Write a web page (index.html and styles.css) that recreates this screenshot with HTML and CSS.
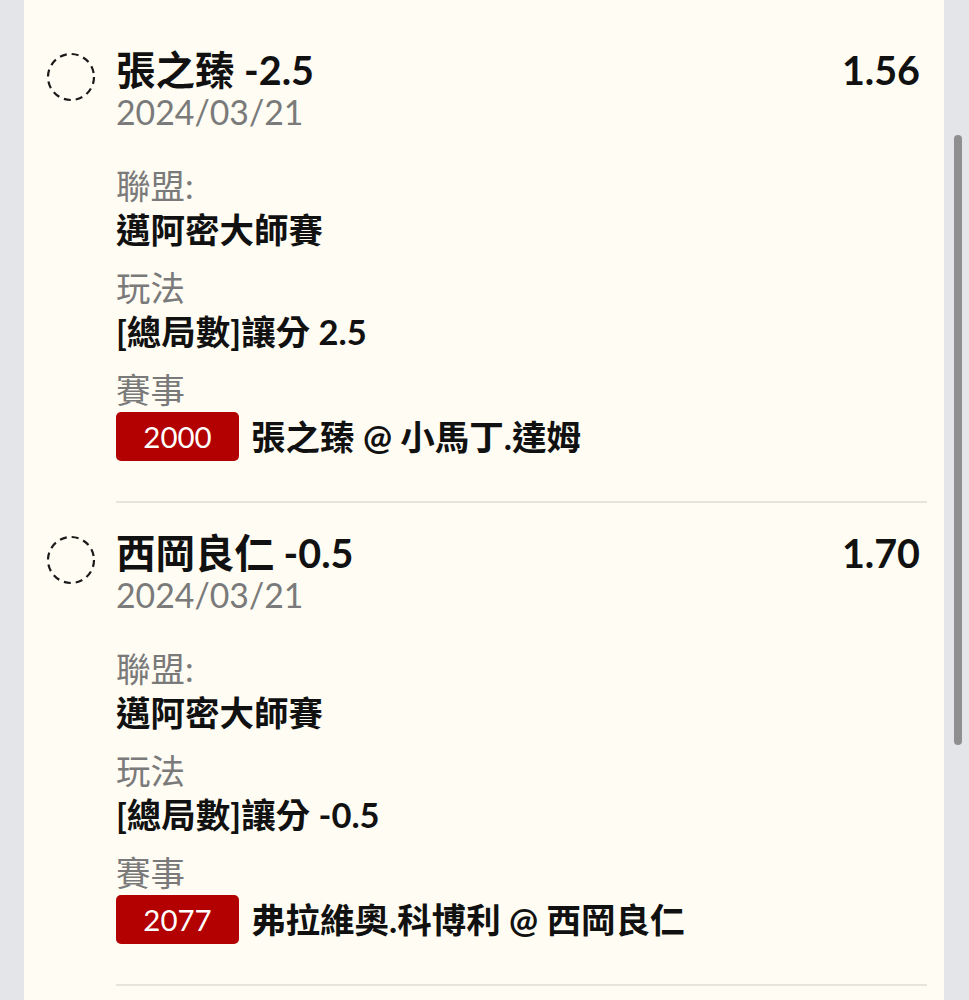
FILE: index.html
```html
<!DOCTYPE html>
<html lang="zh-Hant">
<head>
<meta charset="UTF-8">
<title>注單</title>
<link rel="stylesheet" href="styles.css">
</head>
<body>
	<div class="shell">
		<div class="panel">
			<div class="bet">
				<svg class="pick" viewBox="0 0 50 50"><circle cx="25" cy="25" r="23" /></svg>
				<div class="bet-body">
					<div class="bet-head">
						<span class="bet-title">張之臻 -2.5</span>
						<span class="bet-odds">1.56</span>
					</div>
					<div class="bet-date">2024/03/21</div>
					<div class="field">
						<div class="field-label">聯盟:</div>
						<div class="field-value">邁阿密大師賽</div>
					</div>
					<div class="field">
						<div class="field-label">玩法</div>
						<div class="field-value">[總局數]讓分 2.5</div>
					</div>
					<div class="field">
						<div class="field-label">賽事</div>
						<div class="match">
							<span class="match-no">2000</span>
							<span class="match-name">張之臻 @ 小馬丁.達姆</span>
						</div>
					</div>
				</div>
			</div>
			<div class="bet">
				<svg class="pick" viewBox="0 0 50 50"><circle cx="25" cy="25" r="23" /></svg>
				<div class="bet-body">
					<div class="bet-head">
						<span class="bet-title">西岡良仁 -0.5</span>
						<span class="bet-odds">1.70</span>
					</div>
					<div class="bet-date">2024/03/21</div>
					<div class="field">
						<div class="field-label">聯盟:</div>
						<div class="field-value">邁阿密大師賽</div>
					</div>
					<div class="field">
						<div class="field-label">玩法</div>
						<div class="field-value">[總局數]讓分 -0.5</div>
					</div>
					<div class="field">
						<div class="field-label">賽事</div>
						<div class="match">
							<span class="match-no">2077</span>
							<span class="match-name">弗拉維奧.科博利 @ 西岡良仁</span>
						</div>
					</div>
				</div>
			</div>
		</div>
		<div class="scroll-thumb"></div>
	</div>
</body>
</html>
```

FILE: styles.css
```css
* { padding: 0; margin: 0; box-sizing: border-box; }

body { background: #e4e5e9; font-family: "Lato", "Noto Sans CJK TC", sans-serif; color: #111; }

.shell { display: flex; min-height: 100vh; padding: 0 25px 0 24px; position: relative; overflow: hidden; height: 1000px; }
.panel { flex: 1; background: #fefcf3; padding-top: 20px; }

.bet { display: flex; gap: 20px; padding: 28px 17px 0 22px; }
.pick { width: 50px; height: 50px; flex: none; margin-top: 4px; }
.pick circle { fill: none; stroke: #1a1a1a; stroke-width: 2.2; stroke-dasharray: 7 5.04; }

.bet-body { flex: 1; padding-bottom: 40px; border-bottom: 2px solid #e7e4dc; }
.bet-head { display: flex; justify-content: space-between; font-size: 39.5px; line-height: 44px; font-weight: 700; }
.bet-odds { padding-right: 7px; }
.bet-date { font-size: 33.8px; line-height: 40px; color: #7a7a7a; }

.field { margin-top: 14px; font-size: 34.5px; line-height: 44px; }
.bet-date + .field { margin-top: 32px; }
.field-label { color: #7a7a7a; }
.field-value { font-weight: 700; }

.match { display: flex; align-items: center; gap: 12px; }
.match-no { width: 123px; height: 49px; display: flex; align-items: center; justify-content: center; background: #b30000; color: #fff; border-radius: 5px; font-size: 29.5px; }
.match-name { font-weight: 700; }

.scroll-thumb { position: absolute; right: 7px; top: 135px; width: 8px; height: 610px; border-radius: 4px; background: #8f8f8f; }
```
